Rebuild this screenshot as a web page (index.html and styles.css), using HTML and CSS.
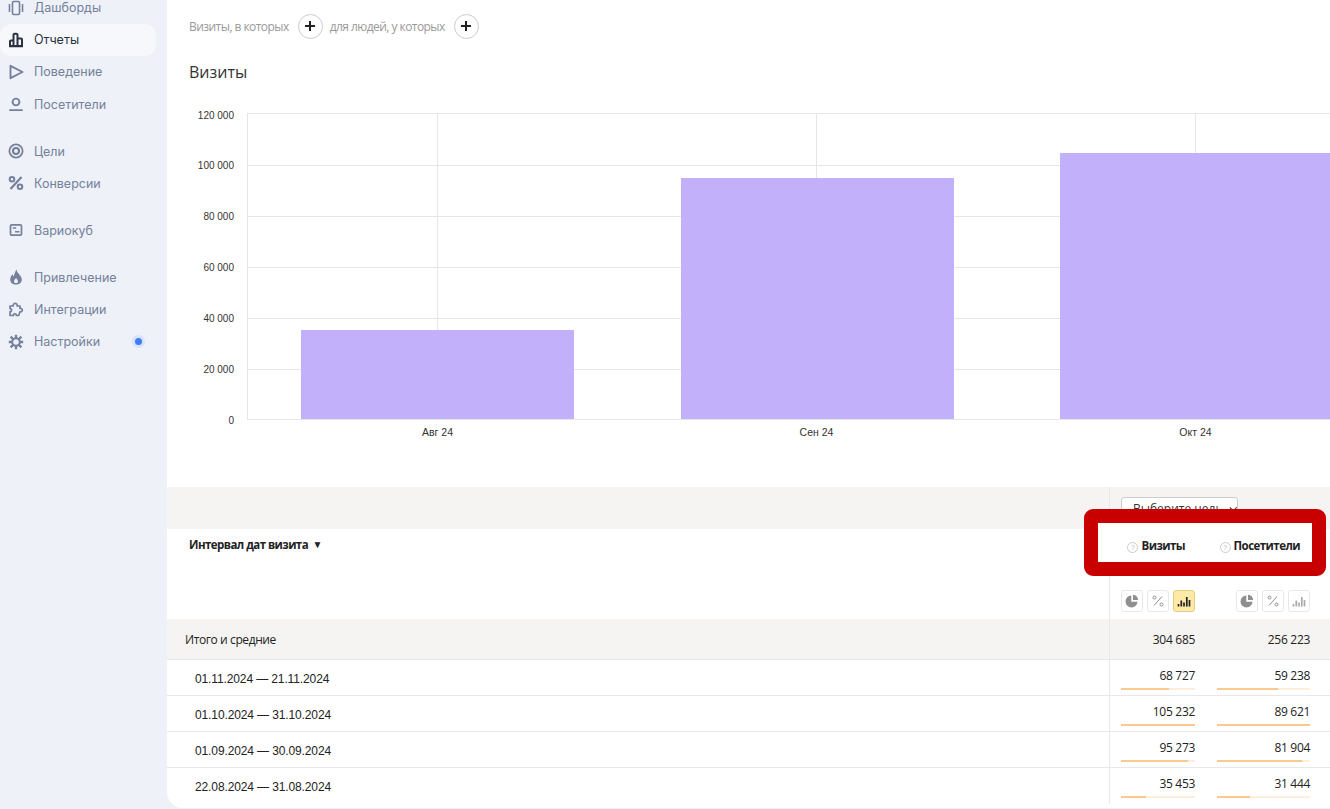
FILE: index.html
```html
<!DOCTYPE html>
<html lang="ru">
  <head>
    <meta charset="UTF-8" />
    <meta name="viewport" content="width=device-width, initial-scale=1.0" />
    <title>Отчет: Визиты</title>
    <link rel="stylesheet" href="styles.css">
  </head>
  <body>
    <div class="page">
      <nav class="sidebar">
        <div class="nav-group">
          <a class="nav-item">
            <svg class="nav-icon" viewBox="0 0 16 16"><path d="M1.500 4v8M14.500 4v8" stroke-width="1.600"/><rect x="4.500" y="1.500" width="7" height="13" rx="1.200" stroke-width="1.600"/></svg>
            Дашборды
          </a>
          <a class="nav-item active">
            <svg class="nav-icon" viewBox="0 0 16 16"><path d="M2 14V9.500a1 1 0 0 1 1-1h2.500V14zM5.500 14V3a1.300 1.300 0 0 1 1.300-1.300h1.400A1.300 1.300 0 0 1 9.500 3v11zM9.500 6.500H13a1 1 0 0 1 1 1V14H9.500zM1 14.200h14" stroke-width="2"/></svg>
            Отчеты
          </a>
          <a class="nav-item">
            <svg class="nav-icon" viewBox="0 0 16 16"><path d="M2.500 1.800 14.500 8 2.500 14.200z" stroke-width="1.900" stroke-linejoin="round"/></svg>
            Поведение
          </a>
          <a class="nav-item">
            <svg class="nav-icon" viewBox="0 0 16 16"><circle cx="8" cy="6" r="3.400" stroke-width="1.900"/><path d="M2 14.200h12" stroke-width="1.800" stroke-linecap="round"/></svg>
            Посетители
          </a>
        </div>
        <div class="nav-group">
          <a class="nav-item">
            <svg class="nav-icon" viewBox="0 0 16 16"><circle cx="8" cy="8" r="6.600" stroke-width="1.800"/><circle cx="8" cy="8" r="3" stroke-width="2.200"/></svg>
            Цели
          </a>
          <a class="nav-item">
            <svg class="nav-icon" viewBox="0 0 16 16"><path d="M13.500 2 2.500 14" stroke-width="2.200"/><circle cx="4" cy="4.300" r="2.300" stroke-width="2"/><circle cx="12" cy="11.700" r="2.300" stroke-width="2"/></svg>
            Конверсии
          </a>
        </div>
        <div class="nav-group">
          <a class="nav-item">
            <svg class="nav-icon" viewBox="0 0 16 16"><rect x="2.500" y="2.800" width="11" height="10.400" rx="1.300" stroke-width="1.700"/><path d="M4.800 6h3.400M7 9.800h4.500" stroke-width="1.600"/></svg>
            Вариокуб
          </a>
        </div>
        <div class="nav-group">
          <a class="nav-item">
            <svg class="nav-icon" viewBox="0 0 16 16"><path class="solid" fill-rule="evenodd" d="M8.500.5c.4 2.500 1.700 3.700 3 5.200 1.200 1.400 2.300 2.900 2.300 4.800 0 3-2.300 5-5.800 5s-5.800-2-5.800-5c0-2.200 1.100-3.900 2.500-5.300.1 1.100.5 1.800 1.100 2.300C6.300 5 7 2.800 8.500.5zM8 9c-1 1.300-2 2.400-2 3.800 0 .8.700 1.300 2 1.300s2-.5 2-1.300C10 11.400 9 10.300 8 9z"/></svg>
            Привлечение
          </a>
          <a class="nav-item">
            <svg class="nav-icon" viewBox="0 0 16 16"><path d="M2 14.500v-3.800c1.800.3 2.300-3.300 0-3V5h3.200C4.800 1.500 9.600 1.500 9.200 5H12v2.500c3-.6 3.200 3.700 0 3.300l-1.300 3.700H8.300c.3-2.300-3.300-2.300-3 0z" stroke-width="1.700" stroke-linejoin="round"/></svg>
            Интеграции
          </a>
          <a class="nav-item has-dot">
            <svg class="nav-icon" viewBox="0 0 16 16"><circle cx="8" cy="8" r="3.800" stroke-width="2"/><path d="M8 .8v3.500M8 11.700v3.500M.8 8h3.500M11.700 8h3.500M2.600 2.600l2.600 2.600M10.800 10.800l2.600 2.600M13.400 2.600l-2.600 2.600M5.200 10.800l-2.600 2.600" stroke-width="2.300"/></svg>
            Настройки
            <span class="nav-dot"></span>
          </a>
        </div>
      </nav>

      <main class="content">
        <div class="filters">
          <span>Визиты, в которых</span>
          <button class="add-btn">
            <svg viewBox="0 0 12 12"><path d="M6 1v10M1 6h10"/></svg>
          </button>
          <span>для людей, у которых</span>
          <button class="add-btn">
            <svg viewBox="0 0 12 12"><path d="M6 1v10M1 6h10"/></svg>
          </button>
        </div>

        <h2 class="chart-title">Визиты</h2>

        <!-- coordinates inside the chart are taken from the page origin -->
        <svg class="chart" viewBox="167 100 1163 345">
          <g class="grid">
            <path d="M247.500 113.500H1330M247.500 165.500H1330M247.500 216.500H1330M247.500 267.500H1330M247.500 318.500H1330M247.500 369.500H1330M247.500 419.500H1330"/>
            <path d="M247.500 113V420M437.500 113V420M816.500 113V420M1195.500 113V420"/>
          </g>
          <g class="bars">
            <rect x="301" y="330" width="273" height="89"/>
            <rect x="681" y="178" width="273" height="241"/>
            <rect x="1060" y="153" width="270" height="266"/>
          </g>
          <g class="y-labels">
            <text x="234" y="119">120 000</text>
            <text x="234" y="169">100 000</text>
            <text x="234" y="220">80 000</text>
            <text x="234" y="271">60 000</text>
            <text x="234" y="322">40 000</text>
            <text x="234" y="373">20 000</text>
            <text x="234" y="424">0</text>
          </g>
          <g class="x-labels">
            <text x="437.500" y="436">Авг 24</text>
            <text x="816.500" y="436">Сен 24</text>
            <text x="1195.500" y="436">Окт 24</text>
          </g>
        </svg>

        <table class="report">
          <colgroup>
            <col />
            <col class="col-visits" />
            <col class="col-people" />
          </colgroup>
          <thead>
            <tr class="goal-row">
              <th></th>
              <th class="metric" colspan="2">
                <button class="goal-btn">
                  Выберите цель
                  <svg viewBox="0 0 11 6"><path d="M1 .8l4.500 4.500L10 .8"/></svg>
                </button>
              </th>
            </tr>
            <tr class="title-row">
              <th class="dim-title">Интервал дат визита <span class="sort">▼</span></th>
              <th class="metric"><span class="metric-name"><i class="hint">?</i>Визиты</span></th>
              <th class="metric-next"><span class="metric-name"><i class="hint">?</i>Посетители</span></th>
            </tr>
            <tr class="mode-row">
              <th></th>
              <th class="metric">
                <div class="modes">
                  <span class="mode"><svg viewBox="0 0 14 14"><path class="pie" d="M6.300 1.500v6.200h6.200A6 6 0 1 1 6.300 1.500zM8 .8A6 6 0 0 1 13.200 6H8z"/></svg></span>
                  <span class="mode"><svg viewBox="0 0 14 14"><path class="pct" d="M11 2.500 3 11.500"/><circle class="pct" cx="3.500" cy="3.500" r="1.500"/><circle class="pct" cx="10.500" cy="10.500" r="1.500"/></svg></span>
                  <span class="mode on"><svg viewBox="0 0 14 14"><path class="lines" d="M1.500 12.500V10M4.300 12.500V6.500M7 12.500V8.500M9.800 12.500V3M12.500 12.500V6"/></svg></span>
                </div>
              </th>
              <th class="metric-next">
                <div class="modes">
                  <span class="mode"><svg viewBox="0 0 14 14"><path class="pie" d="M6.300 1.500v6.200h6.200A6 6 0 1 1 6.300 1.500zM8 .8A6 6 0 0 1 13.200 6H8z"/></svg></span>
                  <span class="mode"><svg viewBox="0 0 14 14"><path class="pct" d="M11 2.500 3 11.500"/><circle class="pct" cx="3.500" cy="3.500" r="1.500"/><circle class="pct" cx="10.500" cy="10.500" r="1.500"/></svg></span>
                  <span class="mode"><svg viewBox="0 0 14 14"><path class="lines off" d="M1.500 12.500V10M4.300 12.500V6.500M7 12.500V8.500M9.800 12.500V3M12.500 12.500V6"/></svg></span>
                </div>
              </th>
            </tr>
          </thead>
          <tbody>
            <tr class="total-row">
              <td>Итого и средние</td>
              <td class="metric">304 685</td>
              <td class="metric-next">256 223</td>
            </tr>
            <tr class="data-row">
              <td class="date">01.11.2024 — 21.11.2024</td>
              <td class="metric">68 727<div class="bar"><div class="fill" style="width: 65.3%"></div></div></td>
              <td class="metric-next">59 238<div class="bar"><div class="fill" style="width: 66.1%"></div></div></td>
            </tr>
            <tr class="data-row">
              <td class="date">01.10.2024 — 31.10.2024</td>
              <td class="metric">105 232<div class="bar"><div class="fill" style="width: 100%"></div></div></td>
              <td class="metric-next">89 621<div class="bar"><div class="fill" style="width: 100%"></div></div></td>
            </tr>
            <tr class="data-row">
              <td class="date">01.09.2024 — 30.09.2024</td>
              <td class="metric">95 273<div class="bar"><div class="fill" style="width: 90.5%"></div></div></td>
              <td class="metric-next">81 904<div class="bar"><div class="fill" style="width: 91.4%"></div></div></td>
            </tr>
            <tr class="data-row last">
              <td class="date">22.08.2024 — 31.08.2024</td>
              <td class="metric">35 453<div class="bar"><div class="fill" style="width: 33.7%"></div></div></td>
              <td class="metric-next">31 444<div class="bar"><div class="fill" style="width: 35.1%"></div></div></td>
            </tr>
          </tbody>
        </table>

        <div class="highlight"></div>
      </main>
    </div>
  </body>
</html>
```

FILE: styles.css
```css
html,
body {
  margin: 0;
  height: 100%;
  overflow: hidden;
}

body {
  background: #eef2f8;
  font-family: "Open Sans", sans-serif;
  color: #222;
}

.page {
  display: flex;
  height: 809px;
}

/* left menu, scrolled a little past its first item */
.sidebar {
  width: 167px;
  flex-shrink: 0;
  margin-top: -8.6px;
  font-family: Inter, sans-serif;
  font-size: 12.5px;
  color: #75809a;
}

.nav-group {
  margin-bottom: 14.8px;
}

.nav-item {
  display: flex;
  align-items: center;
  gap: 10px;
  height: 32.2px;
  width: 156px;
  padding-left: 8px;
  box-sizing: border-box;
  border-radius: 12px;
}

.nav-item.active {
  background: #f6f8fc;
  color: #2b3040;
}

.nav-icon {
  width: 16px;
  height: 16px;
  flex-shrink: 0;
  fill: none;
  stroke: currentColor;
}

.nav-icon .solid {
  fill: currentColor;
  stroke: none;
}

.nav-dot {
  width: 7px;
  height: 7px;
  margin-left: auto;
  margin-right: 14px;
  border-radius: 50%;
  background: #3f7cf6;
  box-shadow: 0 0 0 3px #d7e3fb;
}

/* main white sheet */
.content {
  position: relative;
  flex: 1;
  height: 808px;
  background: #fff;
  border-bottom-left-radius: 16px;
  overflow: hidden;
}

.filters {
  display: flex;
  align-items: center;
  height: 52px;
  padding-left: 22px;
  font-size: 12px;
  letter-spacing: -0.55px;
  color: #999;
}

.add-btn {
  width: 25px;
  height: 25px;
  margin: 0 7px 0 9px;
  padding: 0;
  display: flex;
  align-items: center;
  justify-content: center;
  background: #fff;
  border: 1px solid #ccc;
  border-radius: 50%;
}

.add-btn svg {
  width: 12px;
  height: 12px;
  fill: none;
  stroke: #222;
  stroke-width: 2;
}

.chart-title {
  margin: 8px 0 16px 22px;
  height: 24px;
  font-size: 16px;
  line-height: 24px;
  font-weight: 400;
  color: #333;
}

.chart {
  display: block;
  width: 1163px;
  height: 345px;
}

.grid path {
  fill: none;
  stroke: #e6e6e6;
  stroke-width: 1;
}

.bars rect {
  fill: #c2b1fa;
}

.y-labels text,
.x-labels text {
  font-family: "Liberation Sans", sans-serif;
  font-size: 10px;
  fill: #333;
}

.y-labels text {
  text-anchor: end;
}

.x-labels text {
  font-size: 10.5px;
  text-anchor: middle;
}

/* report table */
.report {
  margin-top: 42px;
  width: 1163px;
  table-layout: fixed;
  border-collapse: separate;
  border-spacing: 0;
  font-size: 12px;
}

.col-visits {
  width: 98px;
}

.col-people {
  width: 123px;
}

.report th,
.report td {
  padding: 0;
  font-weight: 400;
  text-align: left;
}

.report .metric {
  padding-left: 11px;
  padding-right: 12px;
  border-left: 1px solid #e8e8e8;
  text-align: right;
  letter-spacing: -0.3px;
}

.report .metric-next {
  padding-left: 10px;
  padding-right: 20px;
  text-align: right;
  letter-spacing: -0.3px;
}

.goal-row th {
  height: 42px;
  background: #f5f4f2;
  vertical-align: top;
}

.report .goal-row .metric {
  text-align: left;
}

.goal-btn {
  display: flex;
  align-items: center;
  gap: 6px;
  width: 117px;
  height: 26px;
  margin-top: 10px;
  padding: 0 0 3px 11px;
  background: #fff;
  border: 1px solid #ccc;
  border-radius: 3px;
  font: 12px "Open Sans", sans-serif;
  color: #333;
  white-space: nowrap;
}

.goal-btn svg {
  width: 11px;
  height: 6px;
  fill: none;
  stroke: #333;
  stroke-width: 1.300;
}

.report .title-row th {
  height: 46px;
  padding-top: 8px;
  box-sizing: border-box;
  vertical-align: top;
}

.report .dim-title {
  padding-left: 22px;
  font-weight: 700;
  font-size: 11.5px;
  letter-spacing: -0.55px;
}

.sort {
  margin-left: 2px;
  font-size: 10px;
  letter-spacing: 0;
  vertical-align: 1px;
}

.metric-name {
  position: relative;
  z-index: 2;
  padding-right: 10px;
  font-size: 11.5px;
  font-weight: 700;
  letter-spacing: -0.55px;
  white-space: nowrap;
}

.hint {
  display: inline-block;
  width: 9px;
  height: 9px;
  margin-right: 3px;
  border: 1px solid #ccc;
  border-radius: 50%;
  font: 7px/9px "Liberation Sans", sans-serif;
  letter-spacing: 0;
  text-align: center;
  color: #bbb;
  vertical-align: 0;
}

.mode-row th {
  height: 44px;
  vertical-align: top;
}

.modes {
  display: flex;
  justify-content: flex-end;
  gap: 4px;
  margin-top: 15px;
}

.mode {
  display: flex;
  align-items: center;
  justify-content: center;
  width: 22px;
  height: 22px;
  box-sizing: border-box;
  border: 1px solid #e8e8e8;
  border-radius: 3px;
  background: #fff;
}

.mode.on {
  background: #ffe9a6;
  border-color: #e6cd85;
}

.mode svg {
  width: 14px;
  height: 14px;
}

.pie {
  fill: #8f8f8f;
}

.pct {
  fill: none;
  stroke: #8f8f8f;
  stroke-width: 1;
}

.lines {
  fill: none;
  stroke: #222;
  stroke-width: 1.700;
}

.lines.off {
  stroke: #aaa;
}

.total-row td {
  height: 41px;
  box-sizing: border-box;
  background: #f5f4f2;
  border-bottom: 1px solid #e8e8e8;
}

.report .total-row td:first-child {
  padding-left: 18px;
  letter-spacing: -0.4px;
}

.data-row td {
  height: 36px;
  box-sizing: border-box;
  border-bottom: 1px solid #e8e8e8;
}

.data-row.last td {
  border-bottom: none;
}

.report .date {
  padding-left: 28px;
  padding-top: 2px;
  font-family: "Liberation Sans", sans-serif;
  letter-spacing: -0.12px;
  color: #222;
}

.data-row .metric,
.data-row .metric-next {
  vertical-align: top;
  padding-top: 7px;
  line-height: 17px;
}

.bar {
  height: 2px;
  margin-top: 4px;
  background: #fdeedc;
}

.fill {
  height: 100%;
  background: #fbc88d;
}

/* red frame laid over the metric headings */
.highlight {
  position: absolute;
  left: 917px;
  top: 509px;
  width: 214px;
  height: 39px;
  border: 14px solid #c80000;
  border-radius: 9px;
  background: #fff;
  z-index: 1;
}
```
